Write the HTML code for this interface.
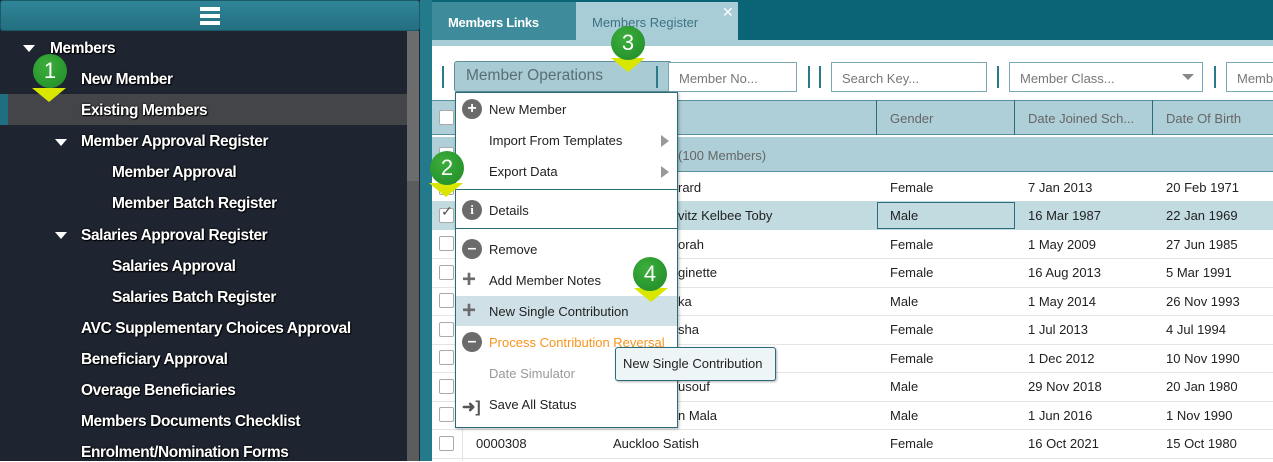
<!DOCTYPE html>
<html><head><meta charset="utf-8"><style>
*{margin:0;padding:0;box-sizing:border-box}
body{width:1273px;height:461px;overflow:hidden;position:relative;background:#fff;font-family:"Liberation Sans",sans-serif}
.a{position:absolute}
.side{left:0;top:0;width:420px;height:461px;background:#1e2430}
.sb{left:0;top:0;width:420px;height:31px;background:linear-gradient(#2f8597,#236f80);border:1px solid #1a5968;border-radius:3px}
.mi{position:absolute;color:#fff;font-weight:bold;font-size:15.5px;letter-spacing:-0.4px;text-shadow:0 0 2px #000,1px 1px 1px #000;white-space:nowrap}
.tri{position:absolute;width:0;height:0;border-left:6px solid transparent;border-right:6px solid transparent;border-top:7px solid #fff}
.t{position:absolute;font-size:13px;color:#222;white-space:nowrap}
.cb{position:absolute;width:15px;height:15px;border:1px solid #aaa;border-radius:2px;background:#fff;left:439px}
.badge{position:absolute;width:34px;height:34px;border-radius:50%;background:radial-gradient(circle at 40% 35%,#3cae3c,#1f8a26);color:#fff;font-size:22px;text-align:center;line-height:34px;z-index:5}
.arr{position:absolute;width:0;height:0;border-left:17px solid transparent;border-right:17px solid transparent;border-top:14px solid #d8e600;z-index:4}
.m{position:absolute;left:489px;font-size:13px;color:#222;white-space:nowrap}
.ic{position:absolute;left:462px;width:20px;height:20px;border-radius:50%;background:#6b6b6b;color:#fff;text-align:center;font-weight:bold;font-size:16px;line-height:20px}
.inp{position:absolute;top:62px;height:30px;border:1px solid #7aa8b4;background:#fff;color:#777;font-size:13px;padding:8px 10px;white-space:nowrap;overflow:hidden}
.bar{position:absolute;top:66px;width:2px;height:22px;background:#2a7a8c}
</style></head><body>
<div class="a side"></div>
<div class="a sb"></div>
<div class="a" style="left:200px;top:7px;width:20px;height:4px;background:#fff;box-shadow:0 7px 0 #fff,0 14px 0 #fff"></div>
<div class="a" style="left:407px;top:31px;width:12px;height:430px;background:#5c5c5c"></div>
<div class="a" style="left:407px;top:31px;width:12px;height:150px;background:#6c6c6c"></div>
<div class="a" style="left:0;top:94px;width:407px;height:31px;background:#444548"></div>
<div class="a" style="left:0;top:94px;width:8px;height:31px;background:#1f6f80"></div>
<div class="tri" style="left:23px;top:45px"></div><div class="mi" style="left:50px;top:40px">Members</div>
<div class="mi" style="left:81px;top:71px">New Member</div>
<div class="mi" style="left:81px;top:102px">Existing Members</div>
<div class="tri" style="left:55px;top:139px"></div><div class="mi" style="left:81px;top:133px">Member Approval Register</div>
<div class="mi" style="left:112px;top:164px">Member Approval</div>
<div class="mi" style="left:112px;top:195px">Member Batch Register</div>
<div class="tri" style="left:55px;top:232px"></div><div class="mi" style="left:81px;top:227px">Salaries Approval Register</div>
<div class="mi" style="left:112px;top:258px">Salaries Approval</div>
<div class="mi" style="left:112px;top:289px">Salaries Batch Register</div>
<div class="mi" style="left:81px;top:320px">AVC Supplementary Choices Approval</div>
<div class="mi" style="left:81px;top:351px">Beneficiary Approval</div>
<div class="mi" style="left:81px;top:382px">Overage Beneficiaries</div>
<div class="mi" style="left:81px;top:413px">Members Documents Checklist</div>
<div class="mi" style="left:81px;top:444px">Enrolment/Nomination Forms</div>

<div class="a" style="left:420px;top:0;width:853px;height:461px;background:#237a8b"></div>
<div class="a" style="left:432px;top:0;width:841px;height:40px;background:#0b6475"></div>
<div class="a" style="left:432px;top:2px;width:144px;height:38px;background:#3e8b9c;color:#fff;font-weight:bold;font-size:13px;padding:13px 0 0 16px;letter-spacing:-0.3px">Members Links</div>
<div class="a" style="left:576px;top:2px;width:162px;height:40px;background:#a9cdd6;color:#3c7282;font-size:13px;padding:13px 0 0 16px">Members Register</div>
<div class="a" style="left:722px;top:4px;color:#fff;font-size:14px">✕</div>
<div class="a" style="left:432px;top:40px;width:841px;height:6px;background:#a9cdd6"></div>
<div class="a" style="left:432px;top:46px;width:841px;height:415px;background:#fff"></div>

<div class="bar" style="left:442px"></div>
<div class="a" style="left:454px;top:61px;width:218px;height:31px;background:#a8cbd4;border:1px solid #5f8f9b;border-radius:3px;color:#5a6e74;font-size:15.5px;padding:5px 11px">Member Operations</div>
<div class="bar" style="left:656px"></div>
<div class="inp" style="left:668px;width:129px">Member No...</div>
<div class="bar" style="left:808px"></div><div class="bar" style="left:819px"></div>
<div class="inp" style="left:831px;width:156px">Search Key...</div>
<div class="bar" style="left:997px"></div>
<div class="inp" style="left:1009px;width:194px">Member Class...</div>
<div class="a" style="left:1182px;top:74px;border-left:6px solid transparent;border-right:6px solid transparent;border-top:6px solid #888"></div>
<div class="bar" style="left:1214px"></div>
<div class="inp" style="left:1226px;width:60px">Member</div>

<div class="a" style="left:432px;top:100px;width:841px;height:35px;background:#aecfd7;border-top:1px solid #5a919e;border-bottom:1px solid #5a919e"></div>
<div class="a" style="left:876px;top:100px;width:1px;height:35px;background:#2a6c7a"></div>
<div class="a" style="left:1014px;top:100px;width:1px;height:35px;background:#2a6c7a"></div>
<div class="a" style="left:1152px;top:100px;width:1px;height:35px;background:#2a6c7a"></div>
<div class="t" style="left:890px;top:111px;color:#666">Gender</div>
<div class="t" style="left:1028px;top:111px;color:#666">Date Joined Sch...</div>
<div class="t" style="left:1166px;top:111px;color:#666">Date Of Birth</div>
<div class="cb" style="top:110px"></div>
<div class="a" style="left:432px;top:137px;width:841px;height:35px;background:#aecfd7;border-bottom:1px solid #5a919e"></div>
<div class="cb" style="top:147px"></div>
<div class="t" style="left:678px;top:148px;color:#666">(100 Members)</div>

<div class="a" style="left:432px;top:201px;width:841px;height:29px;background:#c1dbe1"></div>
<div class="a" style="left:877px;top:202px;width:138px;height:27px;border:1px solid #2a6c7a"></div>
<div class="a" style="left:432px;top:258px;width:841px;height:1px;background:#e4e4e4"></div>
<div class="a" style="left:432px;top:287px;width:841px;height:1px;background:#e4e4e4"></div>
<div class="a" style="left:432px;top:315px;width:841px;height:1px;background:#e4e4e4"></div>
<div class="a" style="left:432px;top:344px;width:841px;height:1px;background:#e4e4e4"></div>
<div class="a" style="left:432px;top:372px;width:841px;height:1px;background:#e4e4e4"></div>
<div class="a" style="left:432px;top:401px;width:841px;height:1px;background:#e4e4e4"></div>
<div class="a" style="left:432px;top:429px;width:841px;height:1px;background:#e4e4e4"></div>
<div class="a" style="left:432px;top:458px;width:841px;height:1px;background:#e4e4e4"></div>
<div class="a" style="left:462px;top:172px;width:1px;height:289px;background:#e4e4e4"></div>

<div class="cb" style="top:180px"></div><div class="t" style="left:678px;top:180px">rard</div><div class="t" style="left:890px;top:180px">Female</div><div class="t" style="left:1028px;top:180px">7 Jan 2013</div><div class="t" style="left:1166px;top:180px">20 Feb 1971</div>
<div class="cb" style="top:208px"></div><div class="a" style="left:441px;top:203px;color:#555;font-size:14px">✓</div><div class="t" style="left:678px;top:208px">vitz Kelbee Toby</div><div class="t" style="left:890px;top:208px">Male</div><div class="t" style="left:1028px;top:208px">16 Mar 1987</div><div class="t" style="left:1166px;top:208px">22 Jan 1969</div>
<div class="cb" style="top:236px"></div><div class="t" style="left:678px;top:237px">orah</div><div class="t" style="left:890px;top:237px">Female</div><div class="t" style="left:1028px;top:237px">1 May 2009</div><div class="t" style="left:1166px;top:237px">27 Jun 1985</div>
<div class="cb" style="top:265px"></div><div class="t" style="left:678px;top:265px">ginette</div><div class="t" style="left:890px;top:265px">Female</div><div class="t" style="left:1028px;top:265px">16 Aug 2013</div><div class="t" style="left:1166px;top:265px">5 Mar 1991</div>
<div class="cb" style="top:293px"></div><div class="t" style="left:678px;top:294px">ka</div><div class="t" style="left:890px;top:294px">Male</div><div class="t" style="left:1028px;top:294px">1 May 2014</div><div class="t" style="left:1166px;top:294px">26 Nov 1993</div>
<div class="cb" style="top:322px"></div><div class="t" style="left:678px;top:322px">sha</div><div class="t" style="left:890px;top:322px">Female</div><div class="t" style="left:1028px;top:322px">1 Jul 2013</div><div class="t" style="left:1166px;top:322px">4 Jul 1994</div>
<div class="cb" style="top:350px"></div><div class="t" style="left:890px;top:351px">Female</div><div class="t" style="left:1028px;top:351px">1 Dec 2012</div><div class="t" style="left:1166px;top:351px">10 Nov 1990</div>
<div class="cb" style="top:379px"></div><div class="t" style="left:678px;top:379px">usouf</div><div class="t" style="left:890px;top:379px">Male</div><div class="t" style="left:1028px;top:379px">29 Nov 2018</div><div class="t" style="left:1166px;top:379px">20 Jan 1980</div>
<div class="cb" style="top:407px"></div><div class="t" style="left:678px;top:408px">n Mala</div><div class="t" style="left:890px;top:408px">Male</div><div class="t" style="left:1028px;top:408px">1 Jun 2016</div><div class="t" style="left:1166px;top:408px">1 Nov 1990</div>
<div class="cb" style="top:436px"></div><div class="t" style="left:476px;top:436px">0000308</div><div class="t" style="left:613px;top:436px">Auckloo Satish</div><div class="t" style="left:890px;top:436px">Female</div><div class="t" style="left:1028px;top:436px">16 Oct 2021</div><div class="t" style="left:1166px;top:436px">15 Oct 1980</div>

<div class="a" style="left:455px;top:92px;width:223px;height:336px;background:#fff;border:1px solid #2a6c7a;box-shadow:1px 1px 3px rgba(0,0,0,.3)"></div>
<div class="a" style="left:456px;top:189px;width:221px;height:1px;background:#2a6c7a"></div>
<div class="a" style="left:456px;top:228px;width:221px;height:1px;background:#2a6c7a"></div>
<div class="a" style="left:456px;top:296px;width:221px;height:30px;background:#cfe1e7"></div>
<div class="ic" style="top:99px">+</div><div class="m" style="top:102px">New Member</div>
<div class="m" style="top:133px">Import From Templates</div><div class="a" style="left:661px;top:135px;border-top:6px solid transparent;border-bottom:6px solid transparent;border-left:8px solid #999"></div>
<div class="m" style="top:164px">Export Data</div><div class="a" style="left:661px;top:166px;border-top:6px solid transparent;border-bottom:6px solid transparent;border-left:8px solid #999"></div>
<div class="ic" style="top:200px;font-size:13px;font-family:'Liberation Serif',serif">i</div><div class="m" style="top:203px">Details</div>
<div class="ic" style="top:239px">–</div><div class="m" style="top:242px">Remove</div>
<div class="a" style="left:462px;top:272px;color:#6b6b6b;font-size:24px;line-height:16px;font-weight:bold">+</div><div class="m" style="top:273px">Add Member Notes</div>
<div class="a" style="left:462px;top:303px;color:#6b6b6b;font-size:24px;line-height:16px;font-weight:bold">+</div><div class="m" style="top:304px">New Single Contribution</div>
<div class="ic" style="top:332px">–</div><div class="m" style="top:335px;color:#f7941d">Process Contribution Reversal</div>
<div class="m" style="top:366px;color:#999">Date Simulator</div>
<div class="a" style="left:462px;top:397px;color:#555;font-size:16px;font-weight:bold">➜]</div><div class="m" style="top:397px">Save All Status</div>

<div class="a" style="left:615px;top:347px;width:161px;height:34px;background:#eef5f7;border:1px solid #2a6c7a;border-radius:3px;font-size:13px;color:#222;padding:8px 7px;box-shadow:1px 1px 2px rgba(0,0,0,.3)">New Single Contribution</div>

<div class="badge" style="left:33px;top:54px">1</div><div class="arr" style="left:32px;top:88px"></div>
<div class="badge" style="left:430px;top:151px">2</div><div class="arr" style="left:429px;top:183px"></div>
<div class="badge" style="left:611px;top:26px">3</div><div class="arr" style="left:611px;top:58px"></div>
<div class="badge" style="left:633px;top:257px">4</div><div class="arr" style="left:634px;top:288px"></div>
</body></html>
